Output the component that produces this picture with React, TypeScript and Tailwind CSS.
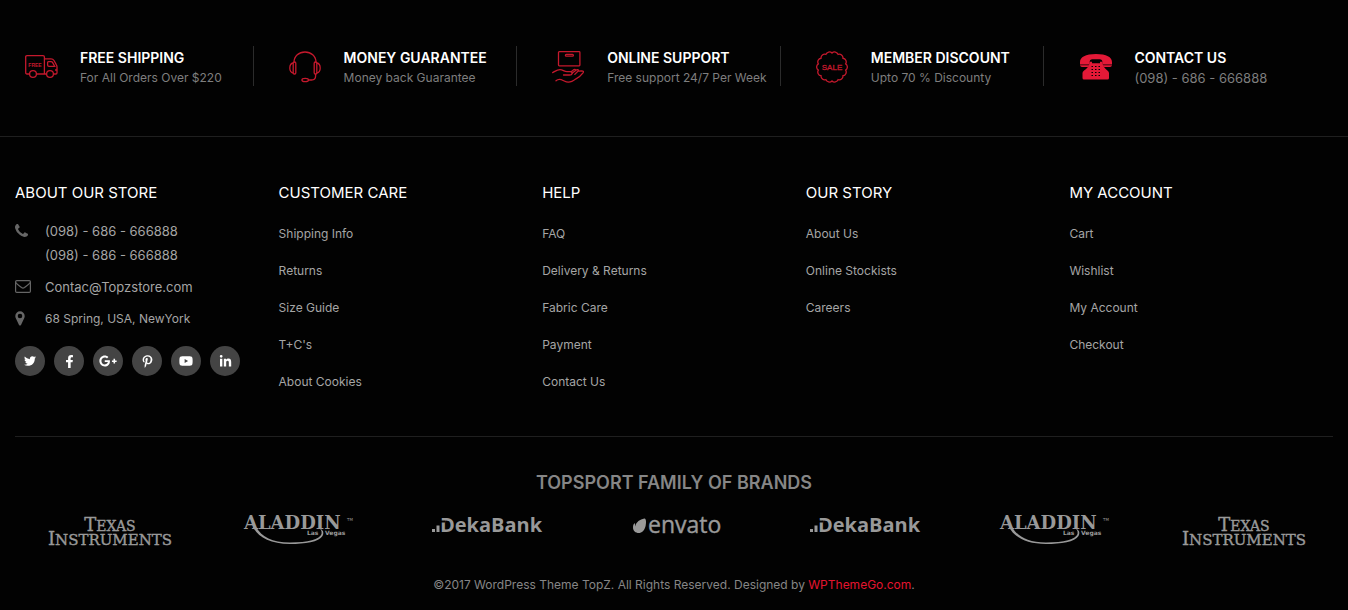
import type { ReactNode } from "react";
import { FaFacebookF, FaGooglePlusG, FaLinkedinIn, FaPinterestP, FaTwitter, FaYoutube } from "react-icons/fa";

// scalloped edge of the sale badge
const badgePath = (() => {
    const count = 14;
    const points = [...Array(count)].map((_, i) => {
        const a = ((i + 0.5) / count) * Math.PI * 2;
        return `${(16 + 14 * Math.cos(a)).toFixed(2)} ${(16 + 14 * Math.sin(a)).toFixed(2)}`;
    });
    return `M${points[0]}` + points.slice(1).concat(points[0]).map((p) => `A3.7 3.7 0 0 1 ${p}`).join("") + "Z";
})();

function TruckIcon() {
    return (
        <svg width="33" height="24" viewBox="0 0 33 24" fill="none" stroke="currentColor" strokeWidth="1.3" aria-hidden="true">
            <path d="M4.500 19H2Q.7 19 .7 17.500V2Q.7.7 2 .7H18Q19.400.7 19.400 2V19H11.500M19.400 3.900H26Q28 3.900 29 5.500L31.400 9.800Q32 10.800 32 12V17.800Q32 19 30.800 19H28.500M21.500 19H19.400" />
            <path d="M23.300 6.600H26.200Q27 6.600 27.500 7.400L29.700 11.300H24Q22.600 11.300 22.600 10V7.500Q22.600 6.600 23.300 6.600ZM30 15H32" />
            <circle cx="8" cy="19" r="3.400" />
            <circle cx="25" cy="19" r="3.400" />
            <text x="10" y="11.500" textAnchor="middle" fontSize="5" fontWeight="700" fontFamily="Liberation Sans, sans-serif" fill="currentColor" stroke="none">FREE</text>
        </svg>
    );
}

function HeadsetIcon() {
    return (
        <svg width="32" height="32" viewBox="0 0 32 32" fill="none" stroke="currentColor" strokeWidth="1.3" aria-hidden="true">
            <path d="M5 11.500C5 5 10 1 16 1S27 5 27 11.500" />
            <rect x="4.200" y="11" width="2.600" height="12" rx="1.200" />
            <rect x="25.200" y="11" width="2.600" height="12" rx="1.200" />
            <path d="M4.200 12C2 12.400.8 14.500.8 17S2 21.600 4.200 22M27.800 12C30 12.400 31.200 14.500 31.200 17S30 21.600 27.800 22" />
            <path d="M26.600 23V25Q26.600 29 22.500 29H19.500" />
            <ellipse cx="16.200" cy="29" rx="3.300" ry="1.700" />
        </svg>
    );
}

function BoxHandIcon() {
    return (
        <svg width="33" height="33" viewBox="0 0 33 33" fill="none" stroke="currentColor" strokeWidth="1.300" strokeLinecap="round" strokeLinejoin="round" aria-hidden="true">
            <rect x="6.500" y=".7" width="21.400" height="14.200" rx=".8" />
            <rect x="13.400" y="3.400" width="8" height="1.800" rx=".9" />
            <path d="M.7 21.600C3 20.400 5 18.600 8 18.600C11 18.600 12 20.700 15 20.700H18.500Q20.600 21 20.200 22.600Q19.800 24 17.500 24H11.500" />
            <path d="M20 22.200L24.600 18.800Q26.400 18 26.400 19.800L22.800 23.400M19.200 20.800L22 18.600Q23.200 18 23.800 19M26.400 20.200L29.600 19.800Q32.400 19.800 31 21.800Q28 25.800 24 27.800Q19.600 31.200 16.400 31.200C13 31.200 10.500 28.400 7.500 28.400Q5.500 28.400 4 29.800" />
        </svg>
    );
}

function SaleIcon() {
    return (
        <svg width="32" height="32" viewBox="0 0 32 32" fill="none" stroke="currentColor" strokeWidth="1.300" aria-hidden="true">
            <path d={badgePath} />
            <text x="16" y="18.500" textAnchor="middle" fontSize="8" fontFamily="Liberation Sans, sans-serif" fill="currentColor" strokeWidth=".3">SALE</text>
        </svg>
    );
}

function TelephoneIcon() {
    return (
        <svg width="32" height="26" viewBox="0 0 32 26" fill="currentColor" aria-hidden="true">
            <path d="M0 10.500V8.200C0 3 5.500 0 16 0S32 3 32 8.200V10.500H22.400V8.200Q22.400 5.200 19.600 5.200H12.400Q9.600 5.200 9.600 8.200V10.500Z" />
            <path d="M0 11.300H9.600Q9.300 13 7.500 13H2Q.3 13 0 11.300ZM22.400 11.300H32Q31.700 13 30 13H24.500Q22.700 13 22.400 11.300Z" />
            <path d="M9.500 7.800H12V9.200H20V7.800H22.500V9.200C23 12.500 25 14.400 27.400 16.400Q29 17.400 29 19V24Q29 25.500 27.500 25.500H4Q2.500 25.500 2.500 24V19Q2.500 17.400 4.100 16.400C7 14.400 9 12.500 9.500 9.200Z" />
            {[12, 15, 18, 21].map((y) => (
                <g key={y} fill="#020202">
                    <rect x="11.500" y={y} width="1.500" height="1" />
                    <rect x="15" y={y} width="1.500" height="1" />
                    <rect x="18.500" y={y} width="1.500" height="1" />
                </g>
            ))}
        </svg>
    );
}

function PhoneIcon() {
    return (
        <svg width="13" height="13" viewBox="192 128 1408 1408" fill="currentColor" aria-hidden="true">
            <path d="M1600 1240q0 27-10 70.5t-21 68.5q-21 50-122 106-94 51-186 51-27 0-53-3.500t-57.500-12.500-47-14.500-55.500-20.500-49-18q-98-35-175-83-127-79-264-216t-216-264q-48-77-83-175-3-9-18-49t-20.500-55.500-14.500-47-12.500-57.500-3.500-53q0-92 51-186 56-101 106-122 25-11 68.500-21t70.500-10q14 0 21 3 18 6 53 76 11 19 30 54t35 63.500 31 53.500q3 4 17.500 25t21.500 35.500 7 28.500q0 20-28.500 50t-62 55-62 53-28.500 46q0 9 5 22.500t8.500 20.500 14 24 11.500 19q76 137 174 235t235 174q2 1 19 11.500t24 14 20.500 8.500 22.500 5q18 0 46-28.500t53-62 55-62 50-28.500q14 0 28.500 7t35.500 21.500 25 17.500q25 15 53.500 31t63.500 35 54 30q70 35 76 53 3 7 3 21z" />
        </svg>
    );
}

function EnvelopeIcon() {
    return (
        <svg width="16" height="13" viewBox="0 0 16 13" fill="none" stroke="currentColor" strokeWidth="1.2" aria-hidden="true">
            <rect x=".6" y=".6" width="14.800" height="11.800" rx="1.200" />
            <path d="M.8 2.500C2 4.500 5 6.200 6.500 7.500Q8 8.600 9.500 7.500C11 6.200 14 4.500 15.200 2.500" />
        </svg>
    );
}

function PinIcon() {
    return (
        <svg width="10" height="15" viewBox="0 0 10 15" fill="currentColor" aria-hidden="true">
            <path fillRule="evenodd" d="M5 .3A4.700 4.700 0 0 1 9.700 5Q9.700 6 9.300 7L6 14Q5 15.200 4 14L.7 7Q.3 6 .3 5A4.700 4.700 0 0 1 5 .3ZM5 2.700A2.300 2.300 0 1 0 5 7.300A2.300 2.300 0 1 0 5 2.700Z" />
        </svg>
    );
}

function TexasLogo() {
    return (
        <svg className="overflow-visible" width="126" height="32" viewBox="0 0 126 32" fill="currentColor" stroke="currentColor" strokeWidth=".4" fontFamily="DejaVu Serif, serif" textAnchor="middle" role="img" aria-label="Texas Instruments">
            <text x="63" y="14" fontSize="14">
                <tspan fontSize="18">T</tspan>EXAS
                <tspan x="63" y="28" fontSize="18">I</tspan>
                <tspan fontSize="15">NSTRUMENTS</tspan>
            </text>
        </svg>
    );
}

function AladdinLogo() {
    return (
        <svg className="overflow-visible" width="112" height="32" viewBox="0 0 112 32" fill="currentColor" role="img" aria-label="Aladdin Las Vegas">
            <text x="1" y="12" fontSize="18" fontWeight="700" fontFamily="DejaVu Serif, serif">ALADDIN</text>
            <text y="18" fontSize="6" fontWeight="700" fontFamily="DejaVu Sans, sans-serif">
                <tspan x="64">Las</tspan>
                <tspan x="82">Vegas</tspan>
            </text>
            <text x="104" y="4" fontSize="4" fontFamily="DejaVu Sans, sans-serif">TM</text>
            <path d="M13 10C19 20 29 25.500 47 25.500C65 25.500 77 22 78.500 17Q79 14 77 11.500Q82 14 79.500 19C76 25 62 27 47 27C27 27 15 20 10 10Z" />
        </svg>
    );
}

function DekaLogo() {
    return (
        <svg className="overflow-visible" width="112" height="20" viewBox="0 0 112 20" fill="currentColor" role="img" aria-label="DekaBank">
            <path d="M0 12H3V15H0ZM4.500 8.500H7.500V15H4.500Z" />
            <text x="8" y="15" fontSize="20" fontWeight="700" fontFamily="Open Sans, sans-serif">DekaBank</text>
            <path d="M8 3.500H13V5.500H8Z" fill="#020202" />
        </svg>
    );
}

function EnvatoLogo() {
    return (
        <svg className="overflow-visible" width="90" height="20" viewBox="0 0 90 20" fill="currentColor" role="img" aria-label="envato">
            <path d="M12.300 1.600C14 1 14.500 5 13.600 9C12.500 13.500 9.800 16 6.800 16C3.500 16 1 13.800 1 10.500C1 8.500 1.600 7 2.500 6.300C3.200 6 3 7.500 3.400 9.400C4 5 8 2.500 12.300 1.600Z" />
            <text x="16" y="16" fontSize="23" stroke="currentColor" strokeWidth=".4" fontFamily="Open Sans, sans-serif">envato</text>
        </svg>
    );
}

const services = [
    { title: "FREE SHIPPING", text: "For All Orders Over $220", icon: <TruckIcon /> },
    { title: "MONEY GUARANTEE", text: "Money back Guarantee", icon: <HeadsetIcon /> },
    { title: "ONLINE SUPPORT", text: "Free support 24/7 Per Week", icon: <BoxHandIcon /> },
    { title: "MEMBER DISCOUNT", text: "Upto 70 % Discounty", icon: <SaleIcon /> },
    { title: "CONTACT US", text: "(098) - 686 - 666888", icon: <TelephoneIcon /> },
];

const menus = [
    { title: "CUSTOMER CARE", links: ["Shipping Info", "Returns", "Size Guide", "T+C's", "About Cookies"] },
    { title: "HELP", links: ["FAQ", "Delivery & Returns", "Fabric Care", "Payment", "Contact Us"] },
    { title: "OUR STORY", links: ["About Us", "Online Stockists", "Careers"] },
    { title: "MY ACCOUNT", links: ["Cart", "Wishlist", "My Account", "Checkout"] },
];

const socials = [
    { name: "Twitter", icon: <FaTwitter size={12} /> },
    { name: "Facebook", icon: <FaFacebookF size={13} /> },
    { name: "Google Plus", icon: <FaGooglePlusG size={18} /> },
    { name: "Pinterest", icon: <FaPinterestP size={13} /> },
    { name: "YouTube", icon: <FaYoutube size={14} /> },
    { name: "LinkedIn", icon: <FaLinkedinIn size={13} /> },
];

const brands = [TexasLogo, AladdinLogo, DekaLogo, EnvatoLogo, DekaLogo, AladdinLogo, TexasLogo];

function ContactRow({ icon, children }: { icon: ReactNode; children: ReactNode }) {
    return (
        <li className="flex">
            <span className="flex h-[22px] w-[30px] shrink-0 items-center text-[#666]">{icon}</span>
            <div>{children}</div>
        </li>
    );
}

function App() {
    return (
        <footer className="min-h-screen bg-[#020202] font-['Inter',sans-serif] text-[12px] text-[#a5a5a5]">
            <div className="border-b border-[#1f1f1f] px-[15px] pt-[46px] pb-[50px]">
                <ul className="grid grid-cols-5">
                    {services.map((item) => (
                        <li key={item.title} className="group pr-[25px]">
                            <div className="flex h-10 items-center border-r border-[#2b2b2b] pl-[10px] group-last:border-r-0">
                                <span className="w-[55px] shrink-0 pt-[2px] text-[#c5192d] group-last:pl-px group-last:text-[#e31937]">{item.icon}</span>
                                <div className="pt-1 whitespace-nowrap">
                                    <h3 className="text-[14px] leading-5 font-semibold text-white">{item.title}</h3>
                                    <p className="leading-5 text-[#7e7e7e] group-last:text-[13px]">{item.text}</p>
                                </div>
                            </div>
                        </li>
                    ))}
                </ul>
            </div>

            <div className="px-[15px]">
                <div className="grid grid-cols-5 border-b border-[#1f1f1f] pt-[46px] pb-9">
                    <section>
                        <h2 className="text-[15px] leading-5 text-white">ABOUT OUR STORE</h2>
                        <ul className="mt-4 flex flex-col gap-2">
                            <ContactRow icon={<PhoneIcon />}>
                                <p className="text-[13px] leading-6">(098) - 686 - 666888</p>
                                <p className="text-[13px] leading-6">(098) - 686 - 666888</p>
                            </ContactRow>
                            <ContactRow icon={<EnvelopeIcon />}>
                                <a href="mailto:Contac@Topzstore.com" className="block text-[13px] leading-6">Contac@Topzstore.com</a>
                            </ContactRow>
                            <ContactRow icon={<PinIcon />}>
                                <p className="leading-6">68 Spring, USA, NewYork</p>
                            </ContactRow>
                        </ul>
                        <ul className="mt-[15px] flex gap-[9px]">
                            {socials.map((item) => (
                                <li key={item.name}>
                                    <a href="#" aria-label={item.name} className="flex size-[30px] items-center justify-center rounded-full bg-[#444] text-white">
                                        {item.icon}
                                    </a>
                                </li>
                            ))}
                        </ul>
                    </section>
                    {menus.map((menu) => (
                        <section key={menu.title}>
                            <h2 className="text-[15px] leading-5 text-white">{menu.title}</h2>
                            <ul className="mt-3 leading-[37px]">
                                {menu.links.map((link) => (
                                    <li key={link}>
                                        <a href="#" className="hover:text-white">{link}</a>
                                    </li>
                                ))}
                            </ul>
                        </section>
                    ))}
                </div>

                <h2 className="mt-9 text-center text-[18px] leading-5 font-semibold text-[#868686]">TOPSPORT FAMILY OF BRANDS</h2>
                <ul className="-mr-[5px] mt-6 grid h-[34px] grid-cols-7 text-[#999]">
                    {brands.map((Logo, index) => (
                        <li key={index} className="flex justify-center">
                            <a href="#"><Logo /></a>
                        </li>
                    ))}
                </ul>
                <p className="mt-6 pb-3 text-center leading-5 text-[#868686]">
                    ©2017 WordPress Theme TopZ. All Rights Reserved. Designed by <a href="#" className="text-[#e5142f]">WPThemeGo.com</a>.
                </p>
            </div>
        </footer>
    );
}

export default App;
